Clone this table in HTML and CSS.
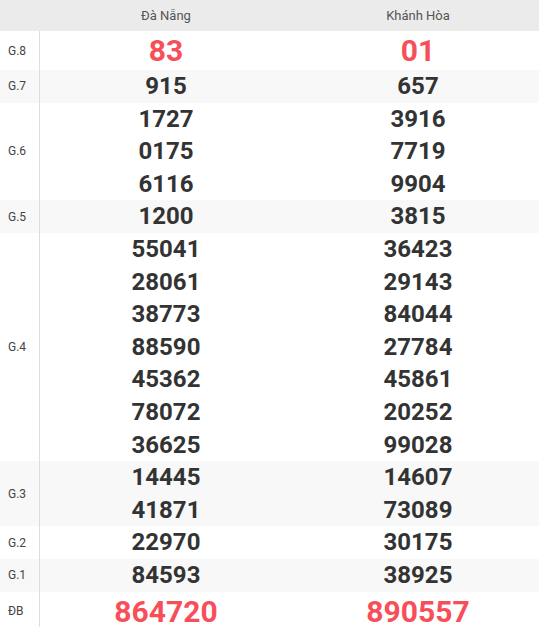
FILE: index.html
```html
<!DOCTYPE html>
<html>
<head>
<meta charset="utf-8">
<link rel="stylesheet" href="styles.css">
</head>
<body>
<div class="table">
  <div class="row head">
    <div class="lbl"></div>
    <div class="col">Đà Nẵng</div>
    <div class="col">Khánh Hòa</div>
  </div>
  <div class="row big">
    <div class="lbl">G.8</div>
    <div class="col red"><span>83</span></div>
    <div class="col red"><span>01</span></div>
  </div>
  <div class="row alt">
    <div class="lbl">G.7</div>
    <div class="col"><span>915</span></div>
    <div class="col"><span>657</span></div>
  </div>
  <div class="row">
    <div class="lbl">G.6</div>
    <div class="col"><span>1727</span><span>0175</span><span>6116</span></div>
    <div class="col"><span>3916</span><span>7719</span><span>9904</span></div>
  </div>
  <div class="row alt">
    <div class="lbl">G.5</div>
    <div class="col"><span>1200</span></div>
    <div class="col"><span>3815</span></div>
  </div>
  <div class="row">
    <div class="lbl">G.4</div>
    <div class="col"><span>55041</span><span>28061</span><span>38773</span><span>88590</span><span>45362</span><span>78072</span><span>36625</span></div>
    <div class="col"><span>36423</span><span>29143</span><span>84044</span><span>27784</span><span>45861</span><span>20252</span><span>99028</span></div>
  </div>
  <div class="row alt">
    <div class="lbl">G.3</div>
    <div class="col"><span>14445</span><span>41871</span></div>
    <div class="col"><span>14607</span><span>73089</span></div>
  </div>
  <div class="row">
    <div class="lbl">G.2</div>
    <div class="col"><span>22970</span></div>
    <div class="col"><span>30175</span></div>
  </div>
  <div class="row alt">
    <div class="lbl">G.1</div>
    <div class="col"><span>84593</span></div>
    <div class="col"><span>38925</span></div>
  </div>
  <div class="row big">
    <div class="lbl">ĐB</div>
    <div class="col red"><span>864720</span></div>
    <div class="col red"><span>890557</span></div>
  </div>
</div>
</body>
</html>
```

FILE: styles.css
```css
html, body {
  margin: 0;
  padding: 0;
  background: #ffffff;
  overflow: hidden;
}
body {
  font-family: Roboto, "Liberation Sans", sans-serif;
  color: #333333;
}
.table {
  width: 544px;
  display: flex;
  flex-direction: column;
}
.row {
  display: grid;
  grid-template-columns: 40px 252px 252px;
  background: #ffffff;
}
.row.alt {
  background: #f8f8f8;
}
.lbl {
  box-sizing: border-box;
  border-right: 1px solid #dddddd;
  font-size: 12px;
  color: #444444;
  padding-left: 8px;
  display: flex;
  align-items: center;
}
.col {
  display: flex;
  flex-direction: column;
  align-items: center;
  font-size: 24px;
  font-weight: 700;
  line-height: 32.6px;
  color: #333333;
}
.head {
  background: #ebebeb;
  height: 31px;
}
.head .lbl {
  border-right: none;
}
.head .col {
  font-size: 13px;
  font-weight: 400;
  line-height: 31px;
  color: #555555;
}
.big .col {
  line-height: 39px;
}
.col.red {
  font-size: 30px;
  color: #f74f59;
}
```
